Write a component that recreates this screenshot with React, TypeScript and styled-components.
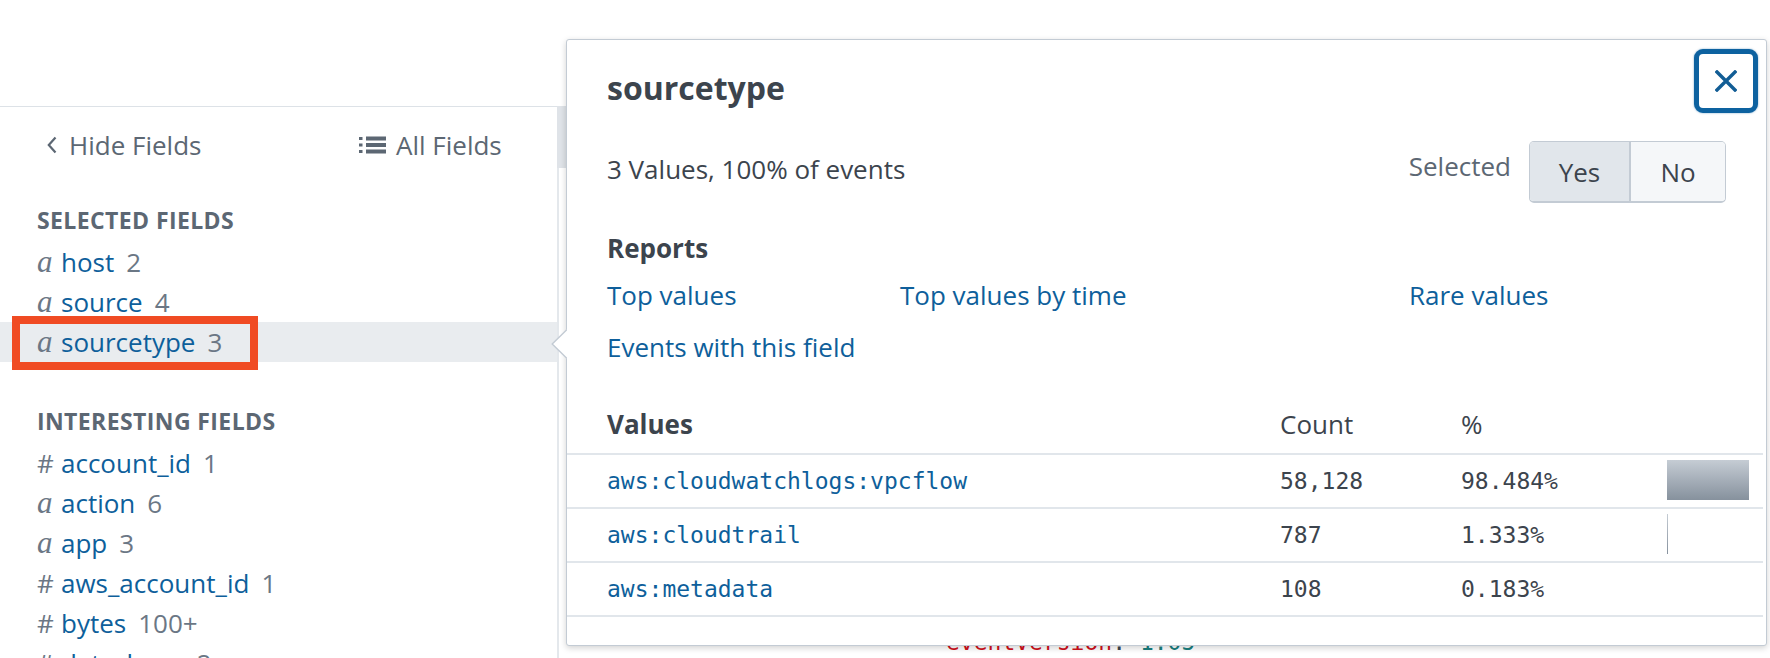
import React from "react";
import styled, { createGlobalStyle } from "styled-components";

const GlobalStyle = createGlobalStyle`
  html, body { margin: 0; padding: 0; background: #ffffff; }
  body {
    width: 1770px;
    height: 658px;
    overflow: hidden;
    font-family: "Open Sans", "Liberation Sans", sans-serif;
    color: #3c444d;
  }
  #root { width: 1770px; height: 658px; overflow: hidden; }
`;

const BLUE = "#0e5f9b";
const GRAY = "#5c6773";
const LINE = "#e1e6eb";
const MONO = `"DejaVu Sans Mono", "Liberation Mono", monospace`;

const Page = styled.div`
  position: relative;
  width: 1770px;
  height: 658px;
  display: flex;
  flex-direction: column;
`;

const TopSpace = styled.div`
  height: 106px;
  flex: none;
`;

const Body = styled.div`
  display: flex;
  flex: 1;
  min-height: 0;
  overflow: hidden;
`;

const Sidebar = styled.aside`
  width: 557px;
  flex: none;
  border-top: 1px solid #dde2e7;
  display: flex;
  flex-direction: column;
  overflow: hidden;
`;

const SidebarHeader = styled.div`
  flex: none;
  height: 76px;
  display: grid;
  grid-template-columns: 312px auto;
  align-items: center;
  padding-left: 47px;
  font-size: 26px;
  color: ${GRAY};
`;

const HeaderAction = styled.div<{ $gap: number }>`
  display: flex;
  align-items: center;
  gap: ${(p) => p.$gap}px;
  line-height: 36px;
`;

const SectionTitle = styled.div<{ $top: number }>`
  flex: none;
  margin-top: ${(p) => p.$top}px;
  margin-bottom: 7px;
  padding-left: 37px;
  font-size: 23px;
  letter-spacing: 0.4px;
  line-height: 30px;
  font-weight: 700;
  color: ${GRAY};
  text-transform: uppercase;
`;

const FieldRow = styled.div<{ $active?: boolean }>`
  flex: none;
  position: relative;
  height: 40px;
  display: flex;
  align-items: center;
  padding-left: 37px;
  background: ${(p) => (p.$active ? "#e9ecef" : "transparent")};
  font-size: 26px;
  white-space: nowrap;
`;

const TypeIcon = styled.span<{ $serif: boolean }>`
  width: 24px;
  flex: none;
  color: #6b7785;
  font-family: ${(p) => (p.$serif ? `"Liberation Serif", "DejaVu Serif", serif` : `"Open Sans", sans-serif`)};
  font-style: ${(p) => (p.$serif ? "italic" : "normal")};
  font-size: ${(p) => (p.$serif ? "31px" : "26px")};
`;

const FieldName = styled.span`
  color: ${BLUE};
`;

const FieldCount = styled.span`
  margin-left: 12px;
  color: #6b7785;
`;

const Annotation = styled.div`
  position: absolute;
  left: 12px;
  top: -6px;
  width: 246px;
  height: 54px;
  box-sizing: border-box;
  border: 8px solid #f04b23;
  pointer-events: none;
`;

const ScrollTrack = styled.div`
  width: 9px;
  flex: none;
  border-left: 2px solid #e4e8ec;
  box-sizing: border-box;
`;

const ScrollThumb = styled.div`
  margin-left: -2px;
  width: 9px;
  height: 62px;
  background: #dfe3e8;
`;

const Main = styled.main`
  flex: 1;
  padding: 525px 0 0 380px;
  font-family: ${MONO};
  font-size: 23px;
  line-height: 23px;
  white-space: pre;
`;

const Token = styled.span<{ $c: string }>`
  color: ${(p) => p.$c};
`;

/* ---------- popup ---------- */

const Popup = styled.section`
  position: absolute;
  left: 566px;
  top: 39px;
  width: 1201px;
  height: 607px;
  box-sizing: border-box;
  background: #ffffff;
  border: 1px solid #c3cbd4;
  border-radius: 3px;
  box-shadow: 0 2px 6px rgba(0, 0, 0, 0.18);
  display: flex;
  flex-direction: column;
`;

const Arrow = styled.svg`
  position: absolute;
  left: -16px;
  top: 289px;
`;

const PopupHeader = styled.div`
  display: flex;
  justify-content: space-between;
  align-items: flex-start;
  padding: 9px 8px 0 40px;
`;

const Title = styled.h2`
  margin: 19px 0 0;
  font-size: 32px;
  line-height: 40px;
  font-weight: 700;
  color: #3c444d;
`;

const CloseButton = styled.button`
  width: 64px;
  height: 64px;
  box-sizing: border-box;
  border: 5px solid #0d62a0;
  border-radius: 9px;
  background: #ffffff;
  display: flex;
  align-items: center;
  justify-content: center;
  padding: 0;
  box-shadow: 0 0 2px rgba(13, 98, 160, 0.6);
`;

const SummaryRow = styled.div`
  margin-top: 28px;
  height: 62px;
  padding: 0 40px;
  display: flex;
  justify-content: space-between;
  align-items: center;
  font-size: 26px;
  line-height: 36px;
`;

const SummaryText = styled.span`
  margin-bottom: 7px;
`;

const SelectedGroup = styled.div`
  display: flex;
  align-items: center;
`;

const SelectedLabel = styled.span`
  color: ${GRAY};
  margin: 0 18px 12px 0;
`;

const Toggle = styled.div`
  display: flex;
  height: 62px;
  box-sizing: border-box;
  border: 1px solid #c3cbd4;
  border-bottom-width: 2px;
  border-radius: 5px;
  overflow: hidden;
`;

const ToggleOption = styled.div<{ $active?: boolean; $w: number }>`
  width: ${(p) => p.$w}px;
  display: flex;
  align-items: center;
  justify-content: center;
  background: ${(p) => (p.$active ? "#e1e6eb" : "#f5f7f9")};
  color: #3c444d;
  & + & {
    border-left: 2px solid #c3cbd4;
  }
`;

const SubHeading = styled.div`
  margin-top: 27px;
  padding-left: 40px;
  font-size: 26px;
  line-height: 36px;
  font-weight: 700;
`;

const Links = styled.div`
  margin-top: 11px;
  padding-left: 40px;
  display: grid;
  grid-template-columns: 293px 509px auto;
  row-gap: 16px;
  font-size: 26px;
  line-height: 36px;
`;

const Link = styled.a`
  color: ${BLUE};
  text-decoration: none;
  white-space: nowrap;
`;

const Table = styled.div`
  margin: 41px 3px 0 0;
  display: flex;
  flex-direction: column;
`;

const GRID = "713px 181px 206px 1fr";

const HeadRow = styled.div`
  display: grid;
  grid-template-columns: ${GRID};
  height: 49px;
  box-sizing: border-box;
  border-bottom: 2px solid ${LINE};
  padding-bottom: 11px;
  align-items: end;
  font-size: 26px;
  line-height: 36px;
`;

const HeadCell = styled.div<{ $bold?: boolean; $pad?: boolean }>`
  font-weight: ${(p) => (p.$bold ? 700 : 400)};
  padding-left: ${(p) => (p.$pad ? "40px" : "0")};
`;

const DataRow = styled.div`
  display: grid;
  grid-template-columns: ${GRID};
  height: 54px;
  box-sizing: border-box;
  border-bottom: 2px solid ${LINE};
  align-items: center;
  font-family: ${MONO};
  font-size: 23px;
  line-height: 30px;
`;

const ValueCell = styled.div`
  padding-left: 40px;
  color: ${BLUE};
`;

const NumCell = styled.div`
  color: #3c444d;
`;

const BarTrack = styled.div`
  width: 83px;
  height: 40px;
  margin-top: -2px;
`;

const Bar = styled.div`
  height: 100%;
  background: linear-gradient(#c5ccd4, #86919d);
`;

const rows = [
  { value: "aws:cloudwatchlogs:vpcflow", count: "58,128", pct: 98.484 },
  { value: "aws:cloudtrail", count: "787", pct: 1.333 },
  { value: "aws:metadata", count: "108", pct: 0.183 },
];

const selected = [
  { t: "a", name: "host", n: "2" },
  { t: "a", name: "source", n: "4" },
  { t: "a", name: "sourcetype", n: "3", active: true },
];

const interesting = [
  { t: "#", name: "account_id", n: "1" },
  { t: "a", name: "action", n: "6" },
  { t: "a", name: "app", n: "3" },
  { t: "#", name: "aws_account_id", n: "1" },
  { t: "#", name: "bytes", n: "100+" },
  { t: "#", name: "date_hour", n: "2" },
];

type F = { t: string; name: string; n: string; active?: boolean };

const Field = ({ f }: { f: F }) => (
  <FieldRow $active={f.active}>
    <TypeIcon $serif={f.t === "a"}>{f.t}</TypeIcon>
    <FieldName>{f.name}</FieldName>
    <FieldCount>{f.n}</FieldCount>
    {f.active && <Annotation />}
  </FieldRow>
);

export default function App() {
  return (
    <Page>
      <GlobalStyle />
      <TopSpace />
      <Body>
        <Sidebar>
          <SidebarHeader>
            <HeaderAction $gap={12}>
              <svg width="10" height="18" viewBox="0 0 10 18">
                <path d="M8.5 1.5 L1.8 9 L8.5 16.5" fill="none" stroke={GRAY} strokeWidth="2.2" />
              </svg>
              <span>Hide Fields</span>
            </HeaderAction>
            <HeaderAction $gap={10}>
              <svg width="27" height="20" viewBox="0 0 27 20">
                <g fill={GRAY}>
                  <rect x="0" y="2" width="3.5" height="3" />
                  <rect x="7" y="1.5" width="20" height="4" />
                  <rect x="0" y="8.5" width="3.5" height="3" />
                  <rect x="7" y="8" width="20" height="4" />
                  <rect x="0" y="15" width="3.5" height="3" />
                  <rect x="7" y="14.5" width="20" height="4" />
                </g>
              </svg>
              <span>All Fields</span>
            </HeaderAction>
          </SidebarHeader>
          <SectionTitle $top={22}>Selected Fields</SectionTitle>
          {selected.map((f) => (
            <Field key={f.name} f={f} />
          ))}
          <SectionTitle $top={44}>Interesting Fields</SectionTitle>
          {interesting.map((f) => (
            <Field key={f.name} f={f} />
          ))}
        </Sidebar>
        <ScrollTrack>
          <ScrollThumb />
        </ScrollTrack>
        <Main>
          <Token $c="#d0111b">eventVersion</Token>
          <Token $c="#3c444d">: </Token>
          <Token $c="#1a7f7f">1.05</Token>
        </Main>
      </Body>

      <Popup>
        <Arrow width="16" height="30" viewBox="0 0 16 30">
          <polygon points="16,0 1,15 16,30" fill="#ffffff" />
          <polyline points="16,0.5 1.2,15 16,29.5" fill="none" stroke="#c3cbd4" strokeWidth="1.4" />
        </Arrow>
        <PopupHeader>
          <Title>sourcetype</Title>
          <CloseButton aria-label="Close">
            <svg width="22" height="22" viewBox="0 0 22 22">
              <path d="M2 2 L20 20 M20 2 L2 20" stroke="#125d95" strokeWidth="3.4" strokeLinecap="square" />
            </svg>
          </CloseButton>
        </PopupHeader>
        <SummaryRow>
          <SummaryText>3 Values, 100% of events</SummaryText>
          <SelectedGroup>
            <SelectedLabel>Selected</SelectedLabel>
            <Toggle>
              <ToggleOption $active $w={99}>Yes</ToggleOption>
              <ToggleOption $w={94}>No</ToggleOption>
            </Toggle>
          </SelectedGroup>
        </SummaryRow>
        <SubHeading>Reports</SubHeading>
        <Links>
          <Link>Top values</Link>
          <Link>Top values by time</Link>
          <Link>Rare values</Link>
          <Link>Events with this field</Link>
        </Links>
        <Table>
          <HeadRow>
            <HeadCell $bold $pad>Values</HeadCell>
            <HeadCell>Count</HeadCell>
            <HeadCell>%</HeadCell>
            <HeadCell />
          </HeadRow>
          {rows.map((r) => (
            <DataRow key={r.value}>
              <ValueCell>{r.value}</ValueCell>
              <NumCell>{r.count}</NumCell>
              <NumCell>{r.pct.toFixed(3)}%</NumCell>
              <BarTrack>
                <Bar style={{ width: `${r.pct}%` }} />
              </BarTrack>
            </DataRow>
          ))}
        </Table>
      </Popup>
    </Page>
  );
}
